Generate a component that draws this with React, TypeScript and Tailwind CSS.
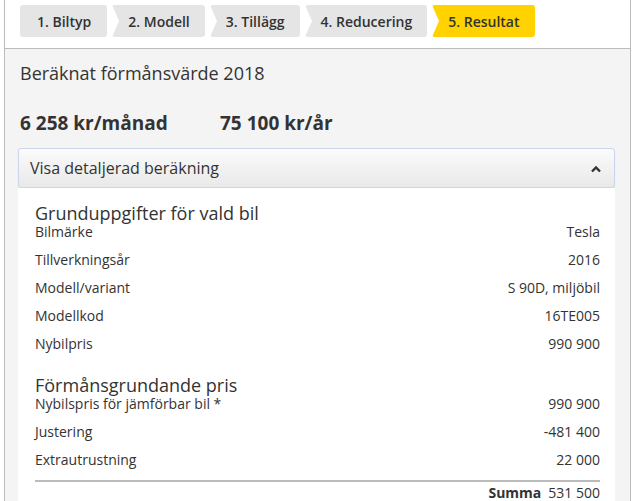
const steps = [
  { id: 1, label: "1. Biltyp" },
  { id: 2, label: "2. Modell" },
  { id: 3, label: "3. Tillägg" },
  { id: 4, label: "4. Reducering" },
  { id: 5, label: "5. Resultat", active: true },
];

const basics = [
  { label: "Bilmärke", value: "Tesla" },
  { label: "Tillverkningsår", value: "2016" },
  { label: "Modell/variant", value: "S 90D, miljöbil" },
  { label: "Modellkod", value: "16TE005" },
  { label: "Nybilpris", value: "990 900" },
];

const pricing = [
  { label: "Nybilspris för jämförbar bil *", value: "990 900" },
  { label: "Justering", value: "-481 400" },
  { label: "Extrautrustning", value: "22 000" },
];

const Row = ({ label, value }: { label: string; value: string }) => (
  <div className="flex justify-between pb-[10px] text-[14px] leading-[18px]">
    <span>{label}</span>
    <span>{value}</span>
  </div>
);

const App = () => {
  return (
    <div className="h-screen overflow-hidden bg-white font-['Open_Sans',sans-serif] text-[#333]">
      <div className="ml-[4px] flex h-full w-[627px] flex-col border-x border-[#bbb]">
        <div className="flex h-[49px] shrink-0 gap-[5px] border-b border-[#bbb] pl-[15px] pt-[5px]">
          {steps.map((step, index) => (
            <div
              key={step.id}
              className={`relative flex h-[32px] items-center rounded-[3px] px-[15px] text-[14px] font-semibold ${
                step.active ? "bg-[#ffd200]" : "bg-[#e5e5e5]"
              }`}
            >
              {index > 0 && (
                <span className="absolute left-0 top-0 h-0 w-0 border-y-[16px] border-l-[7px] border-y-transparent border-l-white" />
              )}
              <span className={index === 0 ? "pl-[2px] pr-[1px]" : "pl-[1px]"}>{step.label}</span>
            </div>
          ))}
        </div>

        <div className="flex-1 bg-[#f4f4f4] pl-[13px] pr-[15px]">
          <h2 className="pl-[2px] pt-[13px] text-[18px] leading-[22px]">
            Beräknat förmånsvärde 2018
          </h2>
          <div className="mt-[28px] flex pl-[2px] text-[19px] font-bold leading-[22px]">
            <span className="w-[200px]">6 258 kr/månad</span>
            <span>75 100 kr/år</span>
          </div>

          <div className="mt-[14px]">
            <div className="flex h-[40px] items-center justify-between rounded-[3px] border border-[#cbd5ee] bg-gradient-to-b from-[#fbfbfb] to-[#e9e9e9] pl-[11px] pr-[12px] shadow-[0_1px_1px_rgba(0,0,0,0.12)]">
              <span className="text-[16px]">Visa detaljerad beräkning</span>
              <svg width="12" height="8" viewBox="0 0 12 8" className="mt-[2px]">
                <polyline
                  points="2,6.5 6,2.5 10,6.5"
                  fill="none"
                  stroke="#333"
                  strokeWidth="2.4"
                />
              </svg>
            </div>
            <div className="bg-white pl-[17px] pr-[15px] pb-[20px]">
              <h3 className="pt-[15px] text-[18px] leading-[20px]">
                Grunduppgifter för vald bil
              </h3>
              {basics.map((row) => (
                <Row key={row.label} {...row} />
              ))}
              <h3 className="mt-[12px] text-[18px] leading-[20px]">
                Förmånsgrundande pris
              </h3>
              {pricing.map((row) => (
                <Row key={row.label} {...row} />
              ))}
              <div className="mt-[1px] border-t-2 border-[#bbb]" />
              <div className="flex justify-end gap-[7px] pt-[2px] text-[14px] leading-[18px]">
                <span className="font-bold">Summa</span>
                <span>531 500</span>
              </div>
            </div>
          </div>
        </div>
      </div>
    </div>
  );
};

export default App;
